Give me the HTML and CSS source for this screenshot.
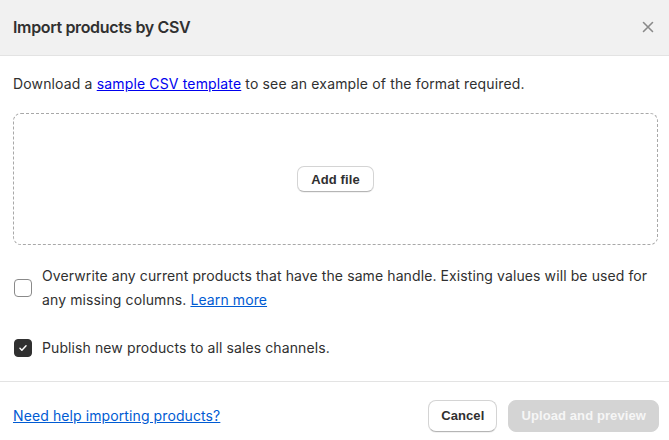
FILE: index.html
```html
<!DOCTYPE html>
<html lang="en">
<head>
<meta charset="utf-8">
<title>Import products by CSV</title>
<link rel="stylesheet" href="styles.css">
</head>
<body>
<div class="modal">
  <header class="modal-header">
    <h2 class="modal-title">Import products by CSV</h2>
    <button class="close" aria-label="Close">
      <svg viewBox="0 0 20 20" width="20" height="20"><path d="M5.5 5.5l9 9M14.5 5.5l-9 9" stroke="#8a8a8a" stroke-width="1.6" stroke-linecap="round" fill="none"/></svg>
    </button>
  </header>
  <section class="modal-body">
    <p class="intro">Download a <a class="plain-link" href="#">sample CSV template</a> to see an example of the format required.</p>
    <div class="dropzone">
      <button class="btn btn-small">Add file</button>
    </div>
    <label class="check">
      <span class="box"></span>
      <span class="check-text">Overwrite any current products that have the same handle. Existing values will be used for any missing columns. <a class="link" href="#">Learn more</a></span>
    </label>
    <label class="check check-single">
      <span class="box checked"><svg viewBox="0 0 20 20" width="18" height="18"><path d="M6.2 10.3l2.4 2.4 5.2-5.4" stroke="#fff" stroke-width="1.8" stroke-linecap="round" stroke-linejoin="round" fill="none"/></svg></span>
      <span class="check-text">Publish new products to all sales channels.</span>
    </label>
  </section>
  <footer class="modal-footer">
    <a class="link" href="#">Need help importing products?</a>
    <div class="actions">
      <button class="btn">Cancel</button>
      <button class="btn btn-disabled">Upload and preview</button>
    </div>
  </footer>
</div>
</body>
</html>
```
FILE: styles.css
```css
* { box-sizing: border-box; }
html, body { margin: 0; padding: 0; background: #fff; }
body {
  font-family: Inter, "Noto Sans", sans-serif;
  color: #303030;
  font-size: 14px;
  letter-spacing: 0.1px;
}
.modal {
  width: 669px;
  height: 440px;
  display: flex;
  flex-direction: column;
  background: #fff;
}
.modal-header {
  height: 56px;
  flex: none;
  background: #f1f1f1;
  border-bottom: 1px solid #e3e3e3;
  display: flex;
  align-items: center;
  justify-content: space-between;
  padding: 0 11px 1px 13px;
}
.modal-title {
  margin: 0;
  font-size: 16px;
  font-weight: 600;
  color: #303030;
  letter-spacing: -0.35px;
}
.close {
  border: 0;
  background: none;
  padding: 0;
  width: 20px;
  height: 20px;
  display: flex;
  cursor: pointer;
}
.modal-body {
  padding: 17px 11px 0 13px;
  height: 326px;
  flex: none;
  border-bottom: 1px solid #e3e3e3;
}
.intro {
  margin: 0 0 18px;
  line-height: 22px;
  font-size: 14px;
  letter-spacing: 0.15px;
}
.plain-link { color: #0000ee; }
.link { color: #005bd3; text-decoration: underline; }
.dropzone {
  height: 132px;
  border: 1px dashed #a8a8a8;
  border-radius: 8px;
  display: flex;
  align-items: center;
  justify-content: center;
  margin-bottom: 19px;
}
.btn {
  font-family: "Liberation Sans", Arial, sans-serif;
  font-weight: 700;
  font-size: 13px;
  letter-spacing: 0.1px;
  color: #303030;
  background: #fff;
  border: 1px solid #d4d4d4;
  border-bottom-color: #b5b5b5;
  border-radius: 8px;
  height: 32px;
  padding: 0 12px;
  box-shadow: 0 1px 0 rgba(0,0,0,0.05);
  cursor: pointer;
}
.btn-small {
  height: 26px;
  padding: 0 13px;
  border-radius: 7px;
}
.btn-disabled {
  background: #d4d4d4;
  border-color: #d4d4d4;
  color: #f6f6f6;
  box-shadow: none;
}
.check {
  display: flex;
  gap: 10px;
  align-items: center;
  line-height: 24px;
  font-size: 14px;
}
.check-single { margin-top: 24px; }
.box {
  flex: none;
  width: 18px;
  height: 18px;
  border: 1px solid #8a8a8a;
  border-radius: 4px;
  margin-left: 1px;
  display: flex;
  align-items: center;
  justify-content: center;
}
.box.checked { background: #303030; border-color: #303030; }
.modal-footer {
  flex: 1;
  display: flex;
  align-items: center;
  justify-content: space-between;
  padding: 9px 10px 0 13px;
}
.actions { display: flex; gap: 11px; }
```
